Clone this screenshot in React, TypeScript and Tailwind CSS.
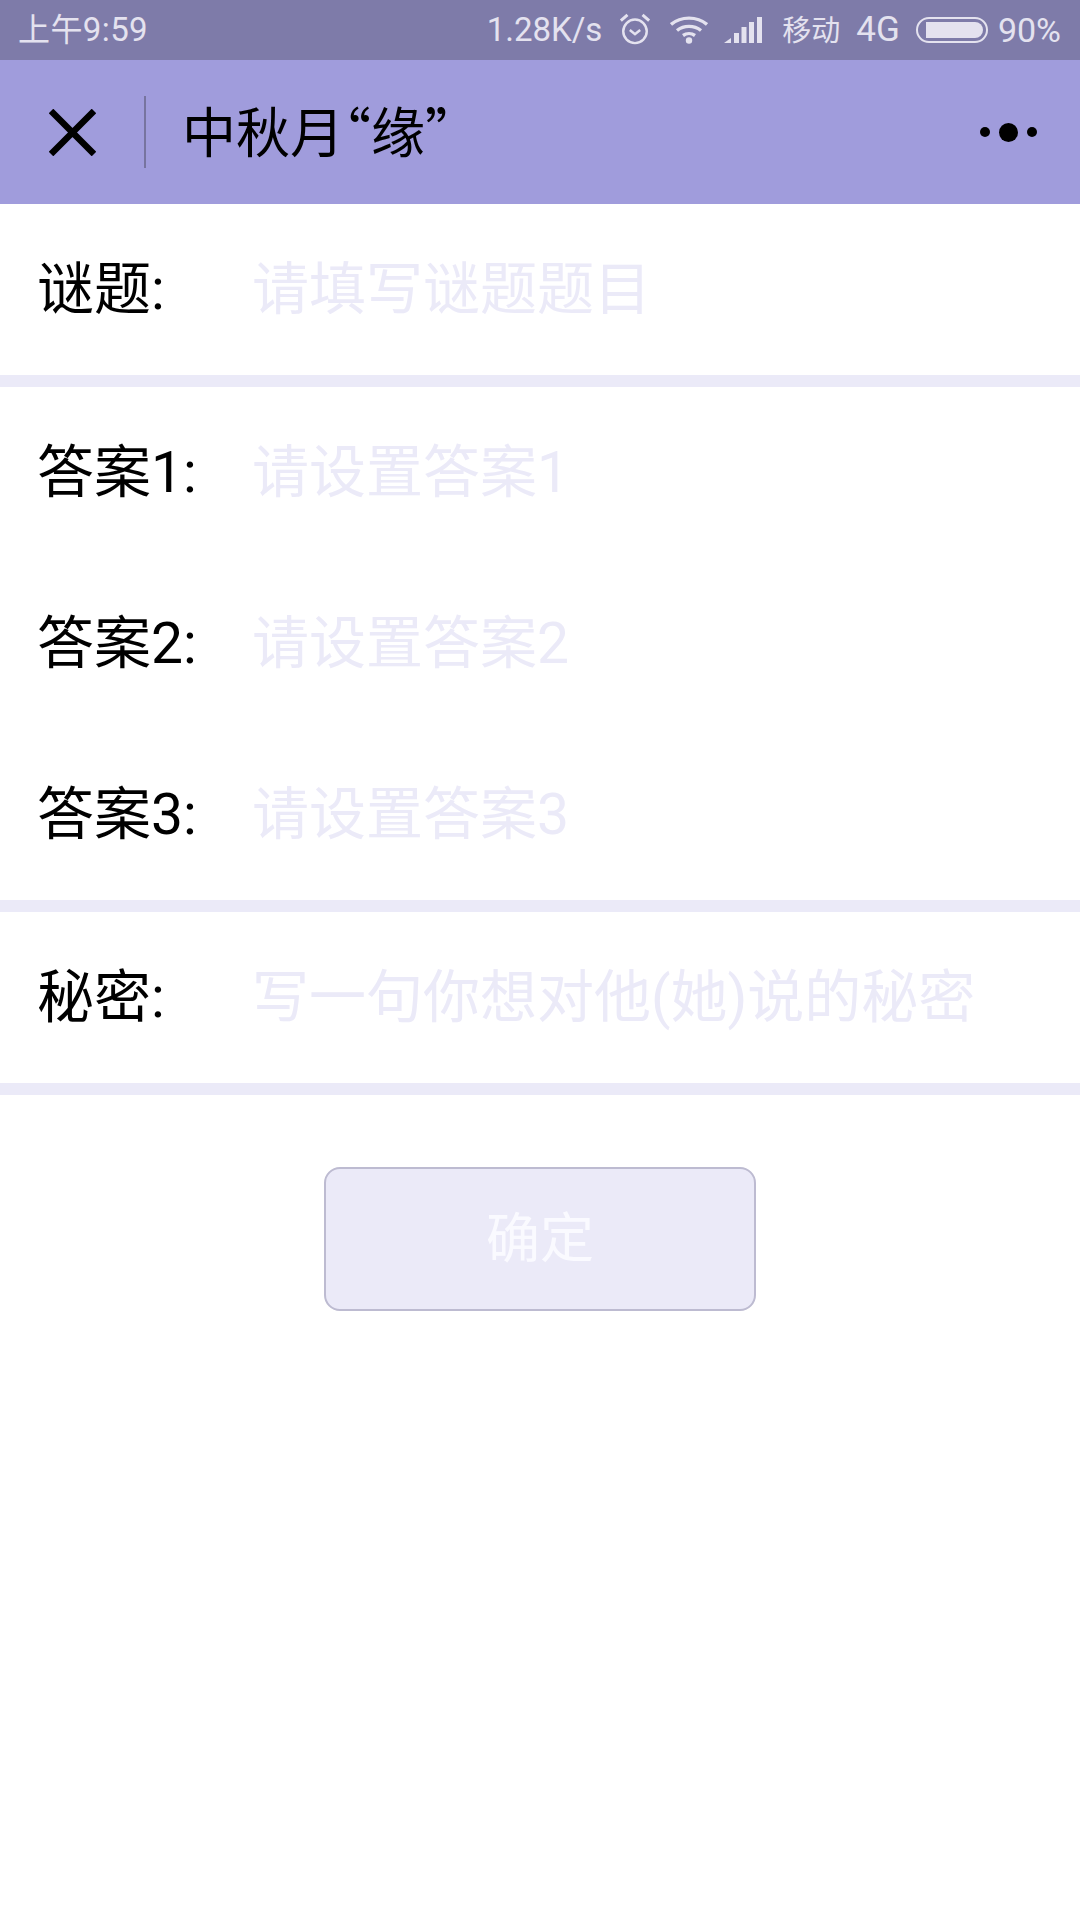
function Alarm() {
  return (
    <svg width="32" height="34" viewBox="0 0 34 36" fill="none" stroke="#e4e2ef">
      <circle cx="17" cy="20.500" r="12.500" strokeWidth="2.600" />
      <path d="M11.500 19l5.500 4.500 5.500-4.500" strokeWidth="2.600" />
      <path d="M2 9l7-6M32 9l-7-6" strokeWidth="3.200" />
    </svg>
  );
}
function Wifi() {
  return (
    <svg width="38" height="30" viewBox="0 0 38 30" fill="none" stroke="#e4e2ef" strokeWidth="3.400">
      <path d="M1 9.500C11 1 27 1 37 9.500" />
      <path d="M7 15.500c7-5.500 17-5.500 24 0" />
      <path d="M13 20.500c3.500-2.500 8.500-2.500 12 0" />
      <circle cx="19" cy="25.500" r="3.200" fill="#e4e2ef" stroke="none" />
    </svg>
  );
}
function Signal() {
  return (
    <svg width="38" height="26" viewBox="0 0 38 26" fill="#e4e2ef">
      <path d="M0 26L7 21V26Z" />
      <rect x="10" y="16" width="5" height="10" />
      <rect x="17.500" y="10" width="5" height="16" />
      <rect x="25" y="5" width="5" height="21" />
      <rect x="33" y="0" width="5" height="26" />
    </svg>
  );
}
function Row({ label, ph }: { label: string; ph: string }) {
  return (
    <div className="flex h-[171px] items-center pl-[37px]">
      <div className="w-[215px] shrink-0 text-[57px] text-black">{label}</div>
      <div className="text-[57px] text-[#ebeaf8]">{ph}</div>
    </div>
  );
}
const Divider = () => <div className="h-[12px] bg-[#ebeaf8]" />;

export default function App() {
  return (
    <div className="min-h-[1920px] w-[1080px] bg-white font-['Roboto','Noto_Sans_CJK_SC',sans-serif]">
      <div className="flex h-[60px] items-center justify-between bg-[#7e7ba9] pl-[18px] pr-[19px] text-[33px] text-[#e4e2ef]">
        <span className="tracking-[0.4px]"><span className="text-[32px]">上午</span>9:59</span>
        <div className="flex items-center">
          <span>1.28K/s</span>
          <span className="ml-[17px] pb-[2px]"><Alarm /></span>
          <span className="ml-[19px]"><Wifi /></span>
          <span className="ml-[16px]"><Signal /></span>
          <span className="ml-[20px] pt-[4px] text-[29px]">移动</span>
          <span className="ml-[16px] pt-[1px] text-[35px]">4G</span>
          <div className="ml-[16px] flex h-[26px] w-[72px] items-center rounded-full border-2 border-[#e4e2ef] p-[3px] pl-[8px]">
            <div className="h-full w-full rounded-r-full bg-[#e4e2ef]" />
          </div>
          <span className="ml-[10px] text-[34px]">90%</span>
        </div>
      </div>
      <div className="flex h-[144px] items-center bg-[#a09cdc]">
        <svg className="ml-[49px] shrink-0" width="47" height="47" viewBox="0 0 47 47" stroke="#000" strokeWidth="6.500" fill="none">
          <path d="M2 2L45 45M45 2L2 45" />
        </svg>
        <div className="ml-[48px] h-[72px] w-[2px] bg-[#77749f]" />
        <div className="ml-[36px] pb-[6px] font-['Noto_Sans_CJK_SC',sans-serif] text-[54px] text-black [font-feature-settings:'halt']">中秋月“缘”</div>
        <div className="ml-auto mr-[43px] flex items-center gap-[9px]">
          <div className="h-[10px] w-[10px] rounded-full bg-black" />
          <div className="h-[19px] w-[19px] rounded-full bg-black" />
          <div className="h-[10px] w-[10px] rounded-full bg-black" />
        </div>
      </div>
      <Row label="谜题:" ph="请填写谜题题目" />
      <Divider />
      <Row label="答案1:" ph="请设置答案1" />
      <Row label="答案2:" ph="请设置答案2" />
      <Row label="答案3:" ph="请设置答案3" />
      <Divider />
      <Row label="秘密:" ph="写一句你想对他(她)说的秘密" />
      <Divider />
      <div className="flex justify-center pt-[72px]">
        <div className="flex h-[144px] w-[432px] items-center justify-center rounded-[16px] border-2 border-[#bdbbd1] bg-[#ebeaf8] text-[54px] text-[#fafaff]">确定</div>
      </div>
    </div>
  );
}
